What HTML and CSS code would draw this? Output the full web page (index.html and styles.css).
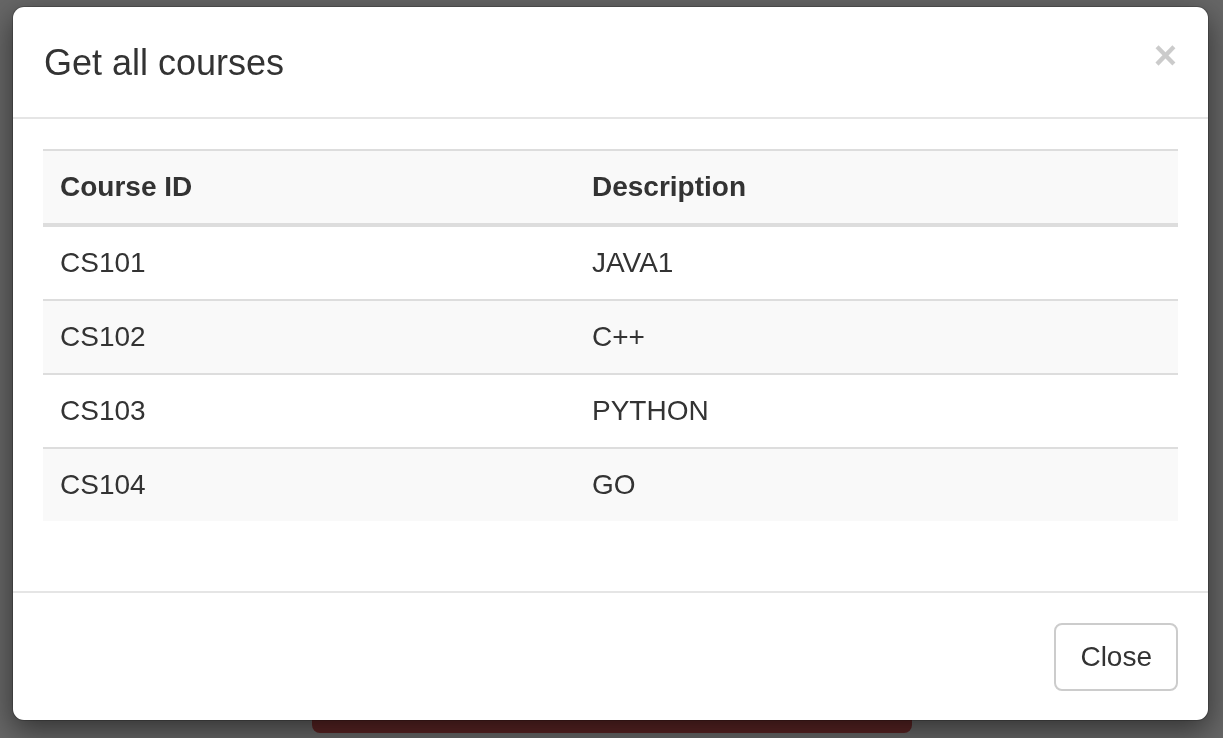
FILE: index.html
```html
<!DOCTYPE html>
<html lang="en">
<head>
<meta charset="utf-8">
<title>Get all courses</title>
<link rel="stylesheet" href="styles.css">
</head>
<body>
  <div class="page">
    <button class="page-btn" type="button">Get all courses</button>
  </div>
  <div class="backdrop"></div>
  <div class="modal">
    <div class="modal-dialog">
      <div class="modal-header">
        <button class="close" type="button" aria-label="Close">&times;</button>
        <h4 class="modal-title">Get all courses</h4>
      </div>
      <div class="modal-body">
        <table class="table">
          <tbody>
            <tr class="head-row">
              <th class="col-id">Course ID</th>
              <th>Description</th>
            </tr>
            <tr><td>CS101</td><td>JAVA1</td></tr>
            <tr><td>CS102</td><td>C++</td></tr>
            <tr><td>CS103</td><td>PYTHON</td></tr>
            <tr><td>CS104</td><td>GO</td></tr>
          </tbody>
        </table>
      </div>
      <div class="modal-footer">
        <button class="btn" type="button">Close</button>
      </div>
    </div>
  </div>
</body>
</html>
```
FILE: styles.css
```css
* { box-sizing: border-box; }

html, body {
  margin: 0;
  height: 100%;
  overflow: hidden;
}

body {
  background: #ffffff;
  font-family: "Liberation Sans", Arial, Helvetica, sans-serif;
  font-size: 28px;
  line-height: 40px;
  color: #333333;
}

.page {
  display: flex;
  justify-content: center;
  padding-top: 673px;
}

.page-btn {
  width: 600px;
  height: 60px;
  border: none;
  border-radius: 8px;
  background: #e05a5a;
  color: #ffffff;
  font: inherit;
}

.backdrop {
  position: fixed;
  inset: 0;
  background: rgba(0, 0, 0, 0.6);
}

.modal {
  position: fixed;
  inset: 0;
}

.modal-dialog {
  margin: 6px 14px 0 12px;
  background: #ffffff;
  border: 1px solid rgba(0, 0, 0, 0.2);
  border-radius: 12px;
  box-shadow: 0 10px 30px rgba(0, 0, 0, 0.5);
  background-clip: padding-box;
}

.modal-header {
  padding: 30px 30px 28px 31px;
  border-bottom: 2px solid #e5e5e5;
}

.modal-header::after {
  content: "";
  display: block;
  clear: both;
}

.modal-title {
  margin: 0;
  font-size: 36px;
  line-height: 52px;
  font-weight: 500;
  color: #333333;
}

.close {
  float: right;
  margin-top: -3px;
  margin-right: 1px;
  padding: 0;
  border: 0;
  background: transparent;
  font-family: "Liberation Sans", Arial, sans-serif;
  font-size: 40px;
  font-weight: 700;
  line-height: 42px;
  color: #000000;
  opacity: 0.2;
}

.modal-body {
  padding: 30px;
}

.table {
  width: 100%;
  border-collapse: collapse;
  border-spacing: 0;
  margin-bottom: 40px;
}

.table th,
.table td {
  padding: 16px 16px 16px 17px;
  line-height: 40px;
  text-align: left;
  vertical-align: top;
  border-top: 2px solid #dddddd;
}

.table th {
  font-weight: 700;
  border-bottom: 4px solid #dddddd;
}

.col-id { width: 532px; }

.table tr:nth-of-type(odd) {
  background: #f9f9f9;
}

.modal-footer {
  display: flex;
  justify-content: flex-end;
  padding: 30px 30px 29px;
  border-top: 2px solid #e5e5e5;
}

.btn {
  padding: 12px 24px;
  font-family: "Liberation Sans", Arial, sans-serif;
  font-size: 28px;
  line-height: 40px;
  color: #333333;
  background: #ffffff;
  border: 2px solid #cccccc;
  border-radius: 8px;
}
```
